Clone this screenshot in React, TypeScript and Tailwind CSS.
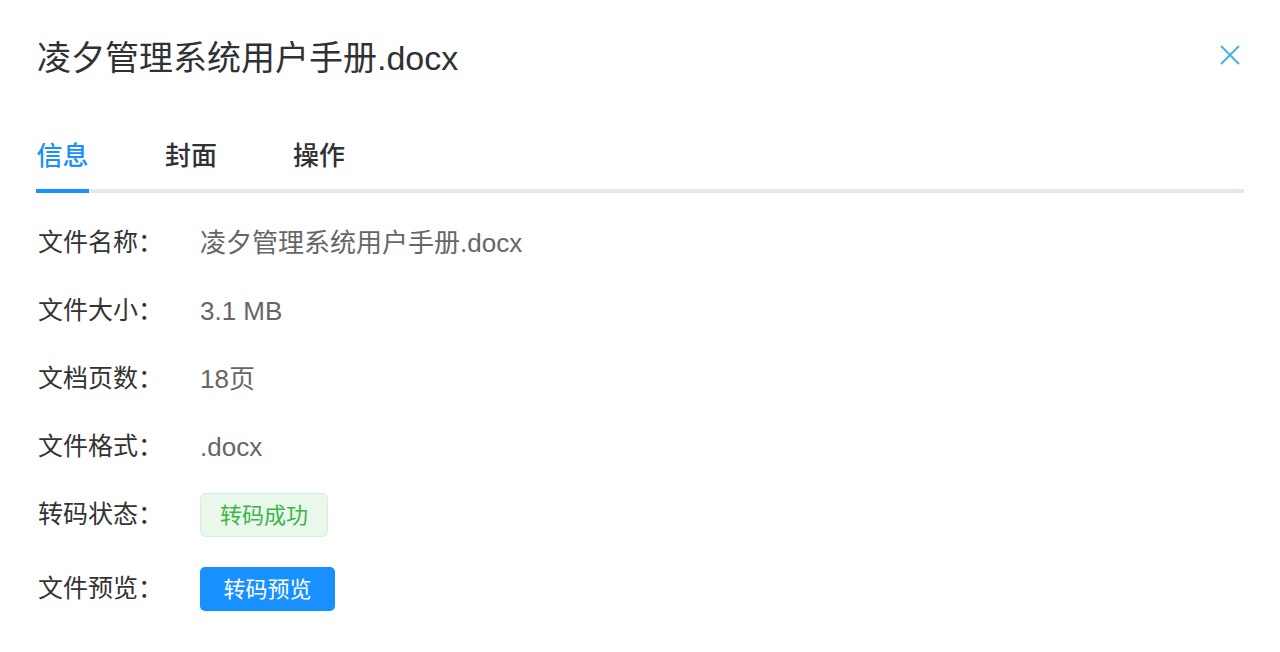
const font = { fontFamily: '"Liberation Sans", "Noto Sans CJK SC", sans-serif' };

const rows: { label: string; value: string }[] = [
    { label: "文件名称：", value: "凌夕管理系统用户手册.docx" },
    { label: "文件大小：", value: "3.1 MB" },
    { label: "文档页数：", value: "18页" },
    { label: "文件格式：", value: ".docx" },
];

export default function App() {
    return (
        <div className="w-[1280px] h-[652px] bg-white overflow-hidden" style={font}>
            {/* 标题 */}
            <div className="flex items-center justify-between pl-[37px] pr-[40px] pt-[36px] h-[80px]">
                <h1 className="text-[34px] leading-[44px] text-[#303133]">凌夕管理系统用户手册.docx</h1>
                <button className="w-[20px] h-[20px] flex items-center justify-center mb-[6px]">
                    <svg width="20" height="20" viewBox="0 0 20 20" fill="none" stroke="#47b1e0" strokeWidth="2">
                        <path d="M1 1L19 19M19 1L1 19" />
                    </svg>
                </button>
            </div>

            {/* 标签页 */}
            <div className="mx-[36px] mt-[59px] border-b-4 border-[#e4e7ed] flex">
                <div className="relative w-[53px] h-[50px] flex items-start justify-center">
                    <span className="text-[26px] leading-[34px] font-medium text-[#1890ff]">信息</span>
                    <div className="absolute left-0 right-0 -bottom-[4px] h-[4px] bg-[#1890ff]" />
                </div>
                <div className="ml-[76px] h-[50px] flex items-start">
                    <span className="text-[26px] leading-[34px] font-medium text-[#303133]">封面</span>
                </div>
                <div className="ml-[76px] h-[50px] flex items-start">
                    <span className="text-[26px] leading-[34px] font-medium text-[#303133]">操作</span>
                </div>
            </div>

            {/* 信息 */}
            <div className="flex flex-col px-[38px] mt-[16px]">
                {rows.map((r) => (
                    <div key={r.label} className="flex items-center h-[68px]">
                        <span className="w-[162px] text-[25px] text-[#333]">{r.label}</span>
                        <span className="text-[26px] text-[#666]">{r.value}</span>
                    </div>
                ))}
                <div className="flex items-center h-[68px]">
                    <span className="w-[162px] text-[25px] text-[#333]">转码状态：</span>
                    <span className="h-[44px] w-[128px] justify-center flex items-center rounded-[6px] border border-[#d4f0d6] bg-[#e9f8ea] text-[22px] text-[#3bb54a]">
                        转码成功
                    </span>
                </div>
                <div className="flex items-center h-[72px] pt-[8px]">
                    <span className="w-[162px] text-[25px] text-[#333]">文件预览：</span>
                    <button className="h-[44px] w-[135px] flex items-center justify-center rounded-[5px] bg-[#1890ff] text-[22px] text-white">
                        转码预览
                    </button>
                </div>
            </div>
        </div>
    );
}
